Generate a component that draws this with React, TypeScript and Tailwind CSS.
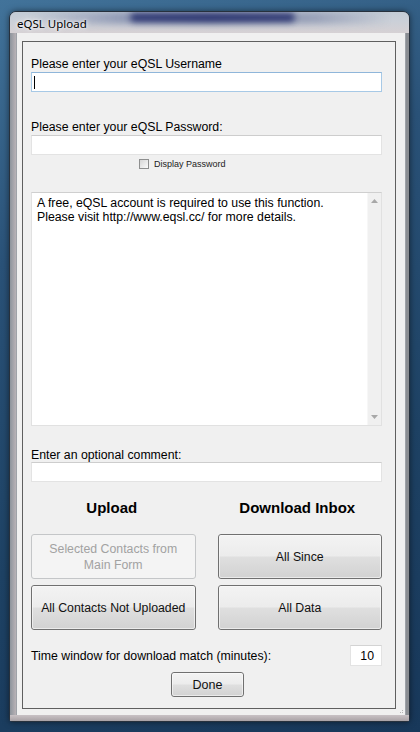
import React from "react";

function WinButton({ children, disabled, className = "" }: { children: React.ReactNode; disabled?: boolean; className?: string }) {
  if (disabled) {
    return (
      <div className={`flex items-center justify-center text-center rounded-[3px] border border-[#c4c6c8] bg-[#f4f4f4] text-[#a2a2a2] leading-[16px] ${className}`}>
        {children}
      </div>
    );
  }
  return (
    <div className={`rounded-[3px] border border-[#707070] bg-[linear-gradient(to_bottom,#f3f3f3_0%,#ececec_48%,#dfdfdf_52%,#d2d2d2_100%)] ${className}`}>
      <div className="h-full w-full rounded-[2px] border border-[#fcfcfc]/60 flex items-center justify-center text-center text-[#111] leading-[16px]">
        {children}
      </div>
    </div>
  );
}

export default function App() {
  return (
    <div className="w-[420px] h-[732px] overflow-hidden bg-[linear-gradient(160deg,#42739a_0%,#2a5278_30%,#1e4264_65%,#18385a_100%)] pl-[9px] pt-[11px] font-['Liberation_Sans',Arial,sans-serif] text-[12.3px] text-black">
      <div className="relative w-[401px] h-[711px] rounded-t-[7px] rounded-b-[3px] border border-[#27313d] bg-[linear-gradient(to_right,#8d949c_0%,#c7bcbf_2%,#bfc3c9_30%,#c3c8ce_70%,#8a8d92_99%)] flex flex-col shadow-[0_0_6px_rgba(0,0,0,0.5)]">
        {/* title bar */}
        <div className="relative h-[21px] overflow-hidden rounded-t-[6px] bg-[linear-gradient(to_bottom,#c3ccd6_0%,#cbd0d8_45%,#d6d1d4_100%)]">
          <div className="absolute left-[20px] top-[0px] w-[360px] h-[12px] bg-[linear-gradient(to_right,transparent,#7c86a8_25%,#5d6890_50%,#8891ad_80%,transparent)] blur-[3px] opacity-70"></div>
          <div className="absolute left-[120px] top-[1px] w-[165px] h-[9px] rounded-full bg-[#1e2868] blur-[3px] opacity-85"></div>
          <div className="absolute left-[7px] top-[5px] text-[11.5px] leading-[13px] font-['Noto_Sans',sans-serif] text-black [text-shadow:0_0_6px_#ffffff,0_0_3px_#ffffff]">
            eQSL Upload
          </div>
        </div>
        <div className="flex flex-1">
          <div className="w-[7px]"></div>
          {/* client area */}
          <div className="flex-1 bg-[#f0f0f0] pl-[5px] pt-[8px] pr-[9px] pb-[6px] flex flex-col outline outline-1 outline-[#9ea2a8]">
            <div className="flex-1 border border-[#5f5f5f] pl-[8px] pr-[13px] pt-[15px] flex flex-col">
              <div className="leading-[14px]">Please enter your eQSL Username</div>
              <div className="mt-[1px] h-[20px] bg-white border border-[#a7c9e6] border-t-[#8fb6da] flex items-center pl-[2px]">
                <div className="w-[1px] h-[13px] bg-black"></div>
              </div>

              <div className="mt-[28px] leading-[14px]">Please enter your eQSL Password:</div>
              <div className="mt-[1px] h-[20px] bg-white border border-[#e3e3e3] border-t-[#cdcdcd]"></div>

              <div className="mt-[4px] h-[10px] flex items-center pl-[108px] gap-[5px]">
                <div className="w-[10px] h-[10px] border border-[#8e8f8f] bg-[linear-gradient(135deg,#d6d6d6,#fbfbfb)]"></div>
                <span className="text-[9px] leading-[10px] text-[#222]">Display Password</span>
              </div>

              {/* text area */}
              <div className="mt-[23px] h-[234px] bg-white border border-[#e1e1e1] border-t-[#cfcfcf] flex">
                <div className="flex-1 pl-[5px] pt-[3px] leading-[14px]">
                  A free, eQSL account is required to use this function.
                  <br />
                  Please visit http://www.eqsl.cc/ for more details.
                </div>
                <div className="w-[14px] bg-[#f0f0f0] border-l border-[#f7f7f7] flex flex-col items-center justify-between py-[6px]">
                  <svg width="7" height="4" viewBox="0 0 7 4">
                    <polygon points="0,4 3.5,0 7,4" fill="#a8a8a8" />
                  </svg>
                  <svg width="7" height="4" viewBox="0 0 7 4">
                    <polygon points="0,0 3.5,4 7,0" fill="#a8a8a8" />
                  </svg>
                </div>
              </div>

              <div className="mt-[22px] leading-[14px]">Enter an optional comment:</div>
              <div className="h-[20px] bg-white border border-[#e3e3e3] border-t-[#cdcdcd]"></div>

              <div className="mt-[17px] grid grid-cols-2 gap-x-[22px] gap-y-[6px]">
                <div className="text-center font-bold text-[15px] leading-[18px] pr-[3px]">Upload</div>
                <div className="text-center font-bold text-[15px] leading-[18px] pr-[5px]">Download Inbox</div>
                <WinButton disabled className="h-[45px] mt-[11px]">
                  Selected Contacts from
                  <br />
                  Main Form
                </WinButton>
                <WinButton className="h-[45px] mt-[11px]">All Since</WinButton>
                <WinButton className="h-[45px]">All Contacts Not Uploaded</WinButton>
                <WinButton className="h-[45px]">All Data</WinButton>
              </div>

              <div className="mt-[15px] flex items-center justify-between">
                <span className="leading-[14px]">Time window for download match (minutes):</span>
                <div className="w-[32px] h-[21px] bg-white border border-[#e3e3e3] border-t-[#d3d3d3] flex items-center justify-end pr-[7px] leading-[14px]">
                  10
                </div>
              </div>

              <div className="mt-[6px] pl-[140px]">
                <WinButton className="w-[73px] h-[25px]">
                  <span className="text-[12.5px]">Done</span>
                </WinButton>
              </div>
            </div>
          </div>
          <div className="w-[4px]"></div>
        </div>
        <div className="h-[6px] bg-[linear-gradient(to_bottom,#c9c2c5,#a9a2a6)]"></div>
        <div className="absolute right-[6px] bottom-[8px] flex flex-col gap-[1px] opacity-50">
          <div className="flex justify-end gap-[1px]"><div className="w-[1px] h-[1px] bg-[#777]"></div></div>
          <div className="flex justify-end gap-[1px]"><div className="w-[1px] h-[1px] bg-[#777]"></div><div className="w-[1px] h-[1px] bg-[#777]"></div></div>
        </div>
      </div>
    </div>
  );
}
